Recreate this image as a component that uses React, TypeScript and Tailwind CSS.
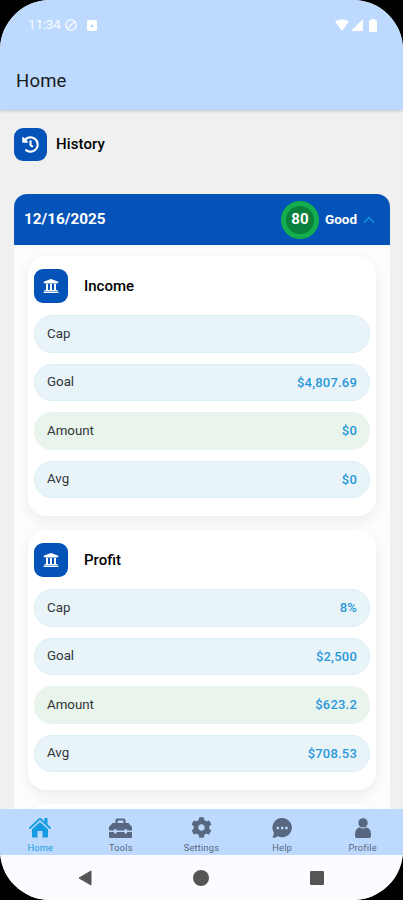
import React from 'react';
import { FaHistory, FaCog, FaUniversity } from 'react-icons/fa';
import { MdOutlineDoNotDisturbAlt } from 'react-icons/md';

interface Row {
    label: string;
    value: string;
    highlight?: boolean;
}

const income: Row[] = [
    { label: 'Cap', value: '' },
    { label: 'Goal', value: '$4,807.69' },
    { label: 'Amount', value: '$0', highlight: true },
    { label: 'Avg', value: '$0' },
];

const profit: Row[] = [
    { label: 'Cap', value: '8%' },
    { label: 'Goal', value: '$2,500' },
    { label: 'Amount', value: '$623.2', highlight: true },
    { label: 'Avg', value: '$708.53' },
];

const HomeIcon = () => (
    <svg width="22" height="21" viewBox="0 0 22 21">
        <path d="M1 11L10 2.500Q11 1.600 12 2.500L21 11" fill="none" stroke="currentColor" strokeWidth="1.800" strokeLinecap="round" />
        <path d="M15.500 1H18.500V7.500L15.500 4.700Z" fill="currentColor" />
        <path d="M11 5L19 12.300V19.500Q19 20.500 18 20.500H13.500V14H8.500V20.500H4Q3 20.500 3 19.500V12.300Z" fill="currentColor" />
    </svg>
);

const ToolboxIcon = () => (
    <svg width="23" height="20" viewBox="0 0 23 20">
        <path d="M7.500 6V2.500Q7.500 1.500 8.500 1.500H14.500Q15.500 1.500 15.500 2.500V6" fill="none" stroke="currentColor" strokeWidth="2.200" />
        <path d="M3.500 5H19.500L23 9V12.500H18V11.300H15.500V12.500H7.500V11.300H5V12.500H0V9Z" fill="currentColor" />
        <path d="M0 14H5V15.500H7.500V14H15.500V15.500H18V14H23V18.500Q23 20 21.500 20H1.500Q0 20 0 18.500Z" fill="currentColor" />
    </svg>
);

const ChatIcon = () => (
    <svg width="20" height="20" viewBox="0 0 20 20">
        <path
            fillRule="evenodd"
            fill="currentColor"
            d="M10.300 0A9.600 9.600 0 1 1 6 18.200Q3.500 19.800 .5 19.800Q1.800 17.800 1.800 14.500A9.600 9.600 0 0 1 10.300 0ZM4.700 8.800V11.200H7.100V8.800ZM9 8.800V11.200H11.400V8.800ZM13.300 8.800V11.200H15.700V8.800Z"
        />
    </svg>
);

const PersonIcon = () => (
    <svg width="16" height="20" viewBox="0 0 16 20">
        <circle cx="8" cy="4.900" r="4.700" fill="currentColor" />
        <path d="M4.500 9.200Q8 12 11.500 9.200Q16 10.500 16 17V18Q16 20 14 20H2Q0 20 0 18V17Q0 10.500 4.500 9.200Z" fill="currentColor" />
    </svg>
);

const tabs = [
    { label: 'Home', icon: <HomeIcon />, active: true },
    { label: 'Tools', icon: <ToolboxIcon /> },
    { label: 'Settings', icon: <FaCog size={21} /> },
    { label: 'Help', icon: <ChatIcon /> },
    { label: 'Profile', icon: <PersonIcon /> },
];

const StatusBar: React.FC = () => (
    <div className="flex h-[50px] items-center pl-7 pr-[26px] text-white">
        <span className="w-[33px] text-[13.5px] leading-none tracking-[-0.2px] opacity-90">11:34</span>
        <MdOutlineDoNotDisturbAlt size={14} className="ml-[3px]" stroke="currentColor" />
        <svg width="10" height="11" viewBox="0 0 10 11" className="ml-[9px]">
            <path fillRule="evenodd" fill="currentColor" d="M1.500 0H8.500Q10 0 10 1.500V9.500Q10 11 8.500 11H1.500Q0 11 0 9.500V1.500Q0 0 1.500 0ZM5 3.500L3.200 7H6.800Z" />
        </svg>
        <div className="ml-auto flex items-center">
            <svg width="14" height="12" viewBox="0 0 14 12">
                <path fill="currentColor" d="M0 2.500Q7 -2 14 2.500L7.700 11Q7 12 6.300 11Z" />
            </svg>
            <svg width="12" height="12" viewBox="0 0 12 12" className="ml-0.5">
                <path fill="currentColor" d="M12 0V12H0Z" />
            </svg>
            <svg width="8" height="13" viewBox="0 0 8 13" className="ml-1.5">
                <path fill="currentColor" d="M2 0H6V1.200H7Q8 1.200 8 2.200V12Q8 13 7 13H1Q0 13 0 12V2.200Q0 1.200 1 1.200H2Z" />
            </svg>
        </div>
    </div>
);

const StatCard: React.FC<{ title: string; rows: Row[] }> = ({ title, rows }) => (
    <div className="h-[260px] shrink-0 rounded-[18px] bg-white px-1.5 pt-[13px] shadow-[0_4px_14px_rgba(0,0,0,0.08)]">
        <div className="flex h-[34px] items-center">
            <div className="flex size-[34px] items-center justify-center rounded-[9px] bg-[#0453b8] text-white">
                <FaUniversity size={16} />
            </div>
            <h2 className="ml-4 text-[15px] font-medium text-black">{title}</h2>
        </div>
        <div className="mt-3 flex flex-col gap-[11px]">
            {rows.map((row) => (
                <div
                    key={row.label}
                    className={`flex h-[37.5px] items-center justify-between rounded-[18px] border px-3 text-[13.3px] ${
                        row.highlight ? 'border-[#e9f4ed] bg-[#e9f4ed]' : 'border-[#dceff7] bg-[#e9f4f8]'
                    }`}
                >
                    <span className="text-[#303538]">{row.label}</span>
                    <span className="text-[13px] font-medium tracking-[0.2px] text-[#2a98dc]">{row.value}</span>
                </div>
            ))}
        </div>
    </div>
);

const App: React.FC = () => {
    return (
        <div className="h-[900px] w-[403px] overflow-hidden bg-black font-[Roboto,sans-serif]">
            <div className="flex h-full flex-col overflow-hidden rounded-[50px] bg-[#f0f0f0]">
                <header className="z-10 h-[110px] shrink-0 bg-[#bddafe] shadow-[0_1px_3px_rgba(0,0,0,0.2)]">
                    <StatusBar />
                    <h1 className="ml-4 mt-[18px] text-[18.5px] leading-[27px] tracking-[0.2px] text-[#171b20]">Home</h1>
                </header>

                <main className="flex min-h-0 flex-1 flex-col overflow-hidden px-3.5 pt-[18px]">
                    <div className="flex shrink-0 items-center">
                        <div className="flex size-[33px] items-center justify-center rounded-[9px] bg-[#0453b8] text-white">
                            <FaHistory size={17} />
                        </div>
                        <h2 className="ml-[9px] text-[15px] font-medium tracking-[0.1px] text-black">History</h2>
                    </div>

                    <section className="mt-[33px] flex min-h-0 w-[376px] flex-1 flex-col overflow-hidden rounded-t-[13px] bg-[#fdfdfd]">
                        <div className="flex h-[51px] shrink-0 items-center bg-[#0453b8] pl-[10px] pr-[15px] text-white">
                            <span className="text-[15.3px] font-bold">12/16/2025</span>
                            <div className="ml-auto flex size-[38px] items-center justify-center rounded-full border-[5px] border-[#12ae4e] bg-[#0b803c] text-[15px] font-bold">
                                80
                            </div>
                            <span className="ml-1.5 text-[13.5px] font-bold">Good</span>
                            <svg width="12" height="8" viewBox="0 0 12 8" className="ml-1.5">
                                <path d="M1 6.500L6 1.500L11 6.500" fill="none" stroke="#1595df" strokeWidth="1.500" />
                            </svg>
                        </div>
                        <div className="flex min-h-0 flex-1 flex-col gap-3.5 overflow-hidden px-3.5 pt-[11px]">
                            <StatCard title="Income" rows={income} />
                            <StatCard title="Profit" rows={profit} />
                            <div className="h-10 shrink-0 rounded-[18px] bg-white shadow-[0_4px_14px_rgba(0,0,0,0.08)]" />
                        </div>
                    </section>
                </main>

                <nav className="z-10 grid h-[46px] shrink-0 grid-cols-5 bg-[#bddafe]">
                    {tabs.map((tab) => (
                        <div
                            key={tab.label}
                            className={`flex flex-col items-center ${tab.active ? 'text-[#169be0]' : 'text-[#56677f]'}`}
                        >
                            <div className="mt-[7px] flex h-[23px] items-center">{tab.icon}</div>
                            <span className="mt-[3px] text-[9.3px] leading-[11px] tracking-[0.2px]">{tab.label}</span>
                        </div>
                    ))}
                </nav>

                <div className="z-10 flex h-[45px] shrink-0 items-center bg-[#fbfcff] text-[#555]">
                    <svg width="14" height="16" viewBox="0 0 14 16" className="ml-[78px]">
                        <path d="M13 1V15L1 8Z" fill="currentColor" stroke="currentColor" strokeLinejoin="round" />
                    </svg>
                    <div className="ml-[101px] size-4 rounded-full bg-current" />
                    <div className="ml-[101px] size-3.5 rounded-[1px] bg-current" />
                </div>
            </div>
        </div>
    );
};

export default App;
